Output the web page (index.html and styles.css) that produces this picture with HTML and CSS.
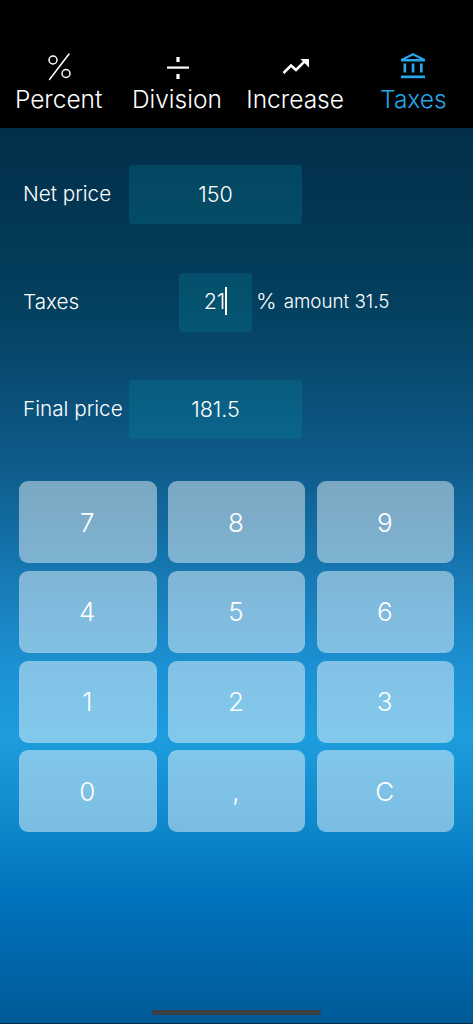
FILE: index.html
```html
<!DOCTYPE html>
<html lang="en">
<head>
<meta charset="utf-8">
<title>Taxes</title>
<link rel="stylesheet" href="styles.css">
</head>
<body>
<div class="app">
  <nav class="tabs">
    <div class="tab">
      <svg class="icon" viewBox="0 0 40 30" fill="none" stroke="currentColor"><path d="M30 3 10.500 28.500" stroke-width="1.500" stroke-linecap="round"/><circle cx="14" cy="9" r="4" stroke-width="1.500"/><circle cx="27" cy="22.500" r="4" stroke-width="1.500"/></svg>
      <span>Percent</span>
    </div>
    <div class="tab">
      <svg class="icon" viewBox="0 0 40 30" fill="currentColor"><rect x="10" y="15.500" width="22" height="2.200"/><rect x="19.400" y="6" width="3.200" height="5"/><rect x="19.400" y="23" width="3.200" height="5"/></svg>
      <span>Division</span>
    </div>
    <div class="tab">
      <svg class="icon" viewBox="0 0 40 30" fill="none" stroke="currentColor"><path d="M8.500 22 16 14.500 21 19 30.500 9.500" stroke-width="2.500"/><path d="M25.500 8h8.500v8.500z" fill="currentColor" stroke="none"/></svg>
      <span>Increase</span>
    </div>
    <div class="tab active">
      <svg class="icon" viewBox="0 0 40 30" fill="currentColor"><path d="M20 2 8 8v2.500h24V8zM20 4.500 27 8H13z" fill-rule="evenodd"/><rect x="10.500" y="12.500" width="2.700" height="9"/><rect x="18.700" y="12.500" width="2.700" height="9"/><rect x="27" y="12.500" width="2.700" height="9"/><rect x="8" y="24.500" width="24" height="2.700"/></svg>
      <span>Taxes</span>
    </div>
  </nav>
  <main class="main">
    <section class="form">
      <div class="row">
        <span class="label">Net price</span>
        <div class="field">150</div>
      </div>
      <div class="row">
        <span class="label">Taxes</span>
        <div class="field field-small"><span class="caret-text">21</span></div>
        <span class="percent">%</span>
        <span class="amount">amount 31.5</span>
      </div>
      <div class="row">
        <span class="label">Final price</span>
        <div class="field">181.5</div>
      </div>
    </section>
    <section class="keypad">
      <div class="key">7</div><div class="key">8</div><div class="key">9</div>
      <div class="key">4</div><div class="key">5</div><div class="key">6</div>
      <div class="key">1</div><div class="key">2</div><div class="key">3</div>
      <div class="key">0</div><div class="key">,</div><div class="key">C</div>
    </section>
    <div class="home-bar"></div>
  </main>
</div>
</body>
</html>
```
FILE: styles.css
```css
* { box-sizing: border-box; }
html, body { margin: 0; padding: 0; }
body {
  width: 473px;
  height: 1024px;
  overflow: hidden;
  background: #000;
  font-family: Inter, "Liberation Sans", sans-serif;
  color: #fff;
}
.app { display: flex; flex-direction: column; height: 1024px; }
.tabs {
  height: 128px;
  flex: none;
  background: #000;
  display: grid;
  grid-template-columns: repeat(4, 1fr);
  padding-top: 51px;
}
.tab {
  display: flex;
  flex-direction: column;
  align-items: center;
  font-size: 24.500px;
  line-height: 29px;
  font-weight: 300;
  color: #fff;
  padding-right: 1px;
}
.tab.active { color: #27a6ea; }
.icon { width: 40px; height: 30px; display: block; margin-bottom: 4px; }
.main {
  position: relative;
  flex: 1;
  padding-top: 37px;
  border-bottom: 1px solid #0a2f4d;
  background: linear-gradient(180deg, #022e4a 0%, #04405f 20%, #0e5c8c 38%, #1a85c4 55%, #1c90d2 60%, #1d9ddd 68%, #0f88cb 78%, #0072bd 86%, #005a97 100%);
}
.form { display: flex; flex-direction: column; gap: 48.500px; padding-left: 23px; }
.row { display: flex; align-items: center; height: 59px; font-size: 20.700px; font-weight: 300; }
.label { width: 106px; flex: none; padding-bottom: 2px; }
.field {
  width: 173px;
  height: 59px;
  border-radius: 4px;
  background: rgba(10, 150, 170, 0.22);
  display: flex;
  align-items: center;
  justify-content: center;
  font-size: 21.500px;
  padding-bottom: 2px;
}
.field-small { width: 73px; margin-left: 50px; }
.caret-text { border-right: 2px solid #fff; line-height: 28px; }
.percent { margin-left: 4px; font-size: 22px; padding-bottom: 2px; }
.amount { margin-left: 7px; font-size: 18.800px; padding-bottom: 2px; }
.keypad {
  display: grid;
  grid-template-columns: repeat(3, 137.500px);
  grid-auto-rows: 82px;
  gap: 7.800px 11.250px;
  margin-top: 42px;
  padding-left: 19px;
}
.key {
  border-radius: 9px;
  background: rgba(255, 255, 255, 0.45);
  display: flex;
  align-items: center;
  justify-content: center;
  font-size: 26px;
  font-weight: 300;
  padding-right: 1px;
}
.home-bar {
  position: absolute;
  left: 152px;
  bottom: 8px;
  width: 169px;
  height: 5px;
  border-radius: 3px;
  background: #3a3d42;
}
```
